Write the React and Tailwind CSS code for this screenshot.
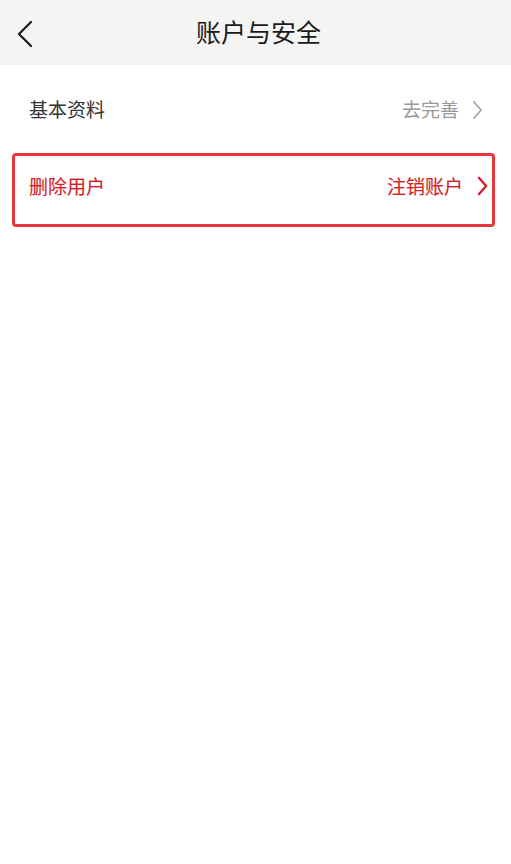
import React from "react";

const font = { fontFamily: '"Noto Sans CJK SC", "Noto Sans", sans-serif' };

function Chevron({ className, width = 2 }) {
  return (
    <svg viewBox="0 0 12 22" className={className} fill="none" stroke="currentColor" strokeWidth={width} strokeLinecap="round" strokeLinejoin="round">
      <path d="M2 2l8 9-8 9" />
    </svg>
  );
}

export default function App() {
  return (
    <div className="min-h-[864px] bg-white" style={font}>
      <div className="h-[65px] bg-[#f4f5f3] flex items-center relative">
        <button className="absolute left-[16px] top-[20px] w-[20px] h-[28px] text-[#1a1a1a]">
          <svg viewBox="0 0 18 28" className="w-[18px] h-[28px]" fill="none" stroke="currentColor" strokeWidth="2.2" strokeLinecap="round" strokeLinejoin="round">
            <path d="M15 2L3 14l12 12" />
          </svg>
        </button>
        <div className="flex-1 text-center text-[25px] text-[#1a1a1a] pl-[6px] -mt-[1px]">账户与安全</div>
      </div>

      <div className="h-[88px] flex items-center justify-between pl-[29px] pr-[28px] pt-[1px]">
        <span className="text-[19px] text-[#333]">基本资料</span>
        <div className="flex items-center gap-[13px]">
          <span className="text-[19px] text-[#999]">去完善</span>
          <Chevron className="w-[11px] h-[20px] text-[#aaa]" />
        </div>
      </div>

      <div className="ml-[12px] mr-[16px] h-[74px] border-[3px] border-[#e8383c] rounded-[4px] flex items-start justify-between pt-[16px] pl-[14px] pr-[4px]">
        <span className="text-[19px] text-[#d31f28] [-webkit-text-stroke:0.15px_#d31f28]">删除用户</span>
        <div className="flex items-center gap-[14px]">
          <span className="text-[19px] text-[#d31f28] [-webkit-text-stroke:0.15px_#d31f28]">注销账户</span>
          <Chevron className="w-[11px] h-[20px] text-[#d31f28]" width={2.6} />
        </div>
      </div>
    </div>
  );
}
